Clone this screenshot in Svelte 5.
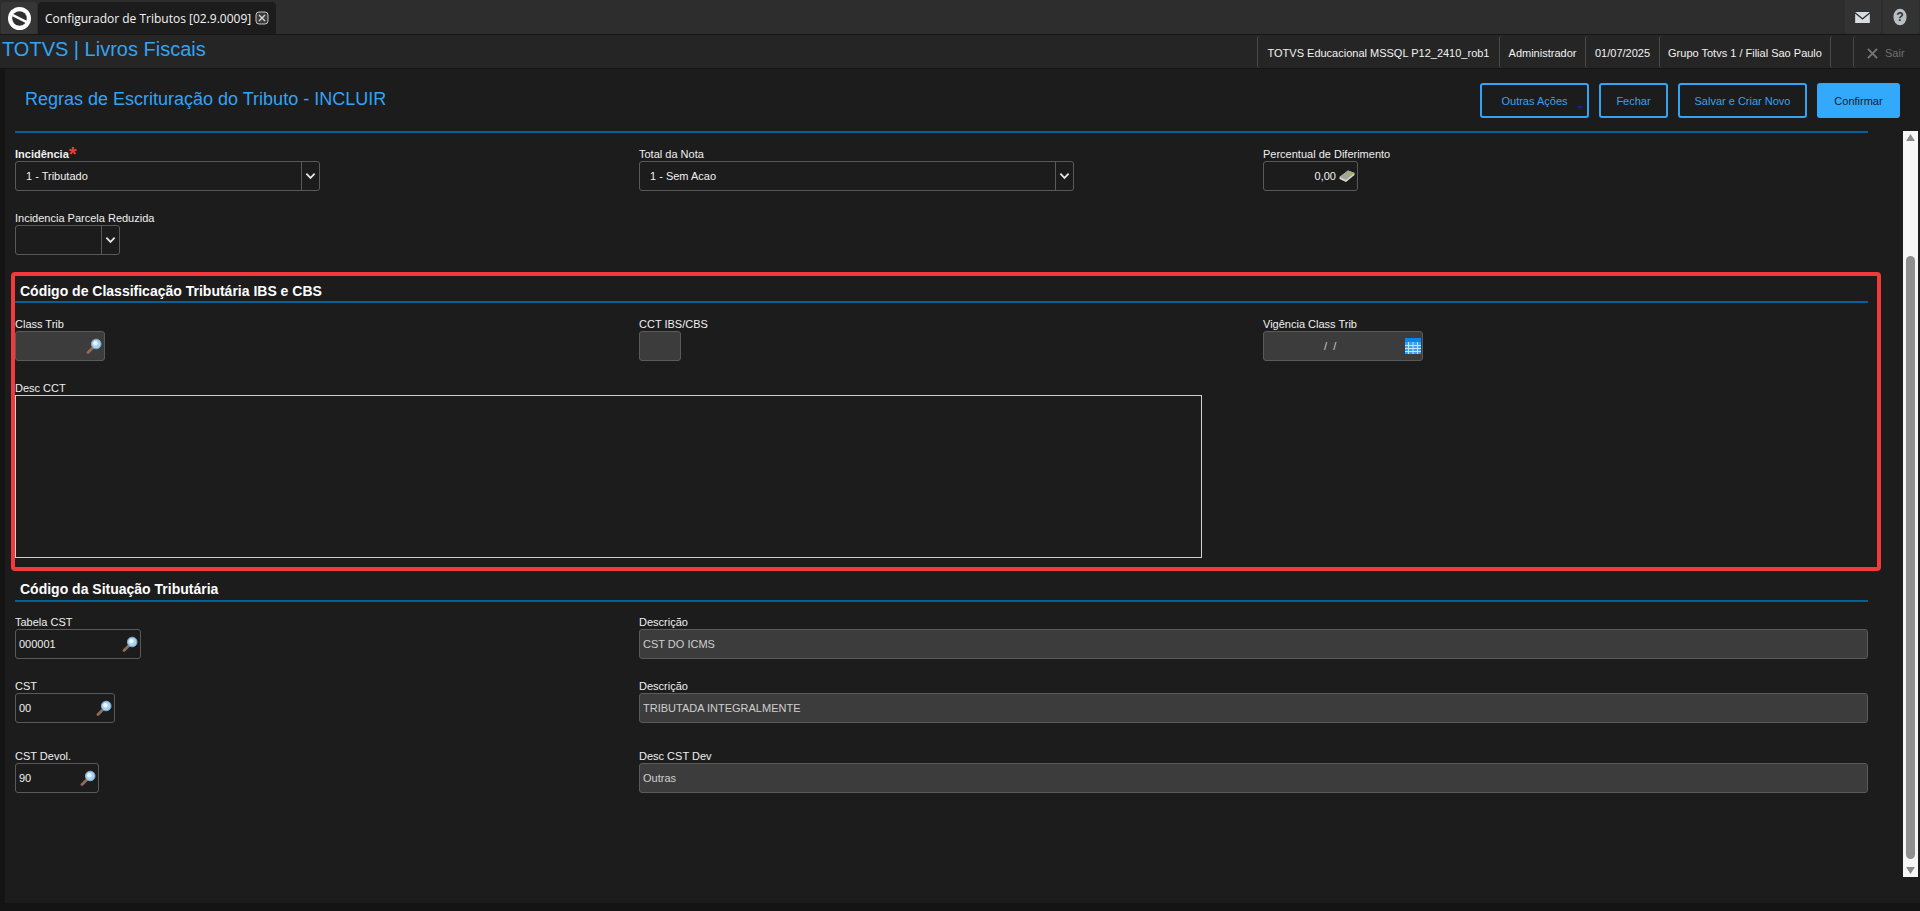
<script>
  const infos = [
    { text: 'TOTVS Educacional MSSQL P12_2410_rob1', w: 242 },
    { text: 'Administrador', w: 86 },
    { text: '01/07/2025', w: 74 },
    { text: 'Grupo Totvs 1 / Filial Sao Paulo', w: 171 },
    { text: '', w: 23 }
  ];
</script>

{#snippet lupa()}
  <svg class="lupa" viewBox="0 0 16 16" width="16" height="16" aria-hidden="true">
    <path d="M2 14.5 L7 9.5" stroke="#8f6c58" stroke-width="2.8" stroke-linecap="round" />
    <circle cx="10.2" cy="6" r="4.8" fill="#a6d2f4" stroke="#7fa9cc" stroke-width="1" />
    <circle cx="9.4" cy="5.2" r="2.2" fill="#eef8ff" />
  </svg>
{/snippet}

{#snippet chevron()}
  <span class="arrow">
    <svg viewBox="0 0 12 8" width="11" height="8" aria-hidden="true">
      <path d="M1.5 1.5 L6 6 L10.5 1.5" fill="none" stroke="#e6e6e6" stroke-width="2" />
    </svg>
  </span>
{/snippet}

<div class="app">
  <div class="topbar">
    <div class="logo">
      <svg viewBox="0 0 24 24" width="23" height="23" aria-hidden="true">
        <circle cx="12" cy="12" r="12" fill="#fff" />
        <circle cx="12" cy="12" r="7.6" fill="#2f2f2f" />
        <path d="M5 8.5 L19 15.5" stroke="#fff" stroke-width="2.4" />
      </svg>
    </div>
    <div class="tab">
      <span>Configurador de Tributos [02.9.0009]</span>
      <svg viewBox="0 0 14 14" width="14" height="14" aria-hidden="true">
        <rect x="1" y="1" width="12" height="12" rx="3" fill="#3c3c3c" stroke="#c4c4c4" stroke-width="1" />
        <path d="M4 4 L10 10 M10 4 L4 10" stroke="#d8d8d8" stroke-width="1.4" />
      </svg>
    </div>
    <div class="top-actions">
      <div class="top-btn">
        <svg viewBox="0 0 16 12" width="15" height="11" aria-hidden="true">
          <path d="M0 0 H16 L8 6.5 Z" fill="#d6dde0" />
          <path d="M0 2 L8 8.5 L16 2 V12 H0 Z" fill="#d6dde0" />
        </svg>
      </div>
      <div class="top-btn">
        <svg viewBox="0 0 16 20" width="14" height="18" aria-hidden="true">
          <ellipse cx="8" cy="10" rx="7.5" ry="9.5" fill="#b9c0c4" />
          <text x="8" y="15" text-anchor="middle" class="q">?</text>
        </svg>
      </div>
    </div>
  </div>

  <div class="infobar">
    <div class="brand">TOTVS | Livros Fiscais</div>
    <div class="infos">
      {#each infos as i}
        <div class="info" style:width="{i.w}px">{i.text}</div>
      {/each}
      <div class="sair">
        <svg viewBox="0 0 12 12" width="11" height="11" aria-hidden="true">
          <path d="M1 1 L11 11 M11 1 L1 11" stroke="#777" stroke-width="2" />
        </svg>
        <span>Sair</span>
      </div>
    </div>
  </div>

  <div class="main">
    <div class="head">
      <h1>Regras de Escrituração do Tributo - INCLUIR</h1>
      <div class="buttons">
        <button class="outline more">Outras Ações<i></i></button>
        <button class="outline fechar">Fechar</button>
        <button class="outline salvar">Salvar e Criar Novo</button>
        <button class="primary">Confirmar</button>
      </div>
    </div>

    <div class="scroller">
      <div class="form">
        <div class="rule"></div>

        <div class="row r1">
          <div class="field">
            <span class="lbl strong">Incidência<em>*</em></span>
            <div class="sel w305"><span>1 - Tributado</span>{@render chevron()}</div>
          </div>
          <div class="field">
            <span class="lbl">Total da Nota</span>
            <div class="sel w435"><span>1 - Sem Acao</span>{@render chevron()}</div>
          </div>
          <div class="field">
            <span class="lbl">Percentual de Diferimento</span>
            <div class="box w95 right">
              <span>0,00</span>
              <svg class="money" viewBox="0 0 16 12" width="16" height="12" aria-hidden="true">
                <path d="M0.5 7 L9 0.5 L15.5 3 V5 L7 12 L0.5 9 Z" fill="#d9d6cc" />
                <path d="M0.5 7 L9 0.5 L15.5 3 L7 10 Z" fill="#a7a398" />
                <path d="M7.5 4.5 L10.5 2 L14.5 3.4 L11.5 6 Z" fill="#93b86c" />
              </svg>
            </div>
          </div>
        </div>

        <div class="row r2">
          <div class="field">
            <span class="lbl">Incidencia Parcela Reduzida</span>
            <div class="sel w105"><span></span>{@render chevron()}</div>
          </div>
        </div>

        <section class="marked">
          <h2>Código de Classificação Tributária IBS e CBS</h2>
          <div class="row r3">
            <div class="field">
              <span class="lbl">Class Trib</span>
              <div class="box off w90 end">{@render lupa()}</div>
            </div>
            <div class="field">
              <span class="lbl">CCT IBS/CBS</span>
              <div class="box off w42"></div>
            </div>
            <div class="field">
              <span class="lbl">Vigência Class Trib</span>
              <div class="box off w160 date">
                <span class="slashes">/&nbsp;&nbsp;/</span>
                <svg class="cal" viewBox="0 0 16 16" width="16" height="16" aria-hidden="true">
                  <rect width="16" height="16" fill="#0b87ec" />
                  <rect y="4" width="16" height="12" fill="#3d9fef" />
                  <path d="M0 7.5 H16 M0 10.5 H16 M0 13.5 H16 M3.5 4 V16 M8 4 V16 M12.5 4 V16" stroke="#c4e2fa" stroke-width="1" />
                </svg>
              </div>
            </div>
          </div>
          <div class="field desc">
            <span class="lbl">Desc CCT</span>
            <div class="area"></div>
          </div>
        </section>

        <h2 class="second">Código da Situação Tributária</h2>

        <div class="row r4 ra">
          <div class="field">
            <span class="lbl">Tabela CST</span>
            <div class="box w126 val"><span>000001</span>{@render lupa()}</div>
          </div>
          <div class="field span2">
            <span class="lbl">Descrição</span>
            <div class="box off wide"><span>CST DO ICMS</span></div>
          </div>
        </div>
        <div class="row r4 rb">
          <div class="field">
            <span class="lbl">CST</span>
            <div class="box w100 val"><span>00</span>{@render lupa()}</div>
          </div>
          <div class="field span2">
            <span class="lbl">Descrição</span>
            <div class="box off wide"><span>TRIBUTADA INTEGRALMENTE</span></div>
          </div>
        </div>
        <div class="row r4 rc">
          <div class="field">
            <span class="lbl">CST Devol.</span>
            <div class="box w84 val"><span>90</span>{@render lupa()}</div>
          </div>
          <div class="field span2">
            <span class="lbl">Desc CST Dev</span>
            <div class="box off wide"><span>Outras</span></div>
          </div>
        </div>
      </div>

      <div class="scrollbar">
        <svg viewBox="0 0 10 8" width="9" height="7" aria-hidden="true"><path d="M5 0 L10 8 H0 Z" fill="#8a8a8a" /></svg>
        <div class="thumb-space"><div class="thumb"></div></div>
        <svg viewBox="0 0 10 8" width="9" height="7" aria-hidden="true"><path d="M0 0 H10 L5 8 Z" fill="#8a8a8a" /></svg>
      </div>
    </div>
  </div>
</div>

<style>
  :global(body) { margin: 0; background: #141414; }
  .app {
    width: 1920px; height: 911px; overflow: hidden;
    display: flex; flex-direction: column;
    font-family: "Liberation Sans", Arial, sans-serif;
    background: #141414; color: #f0f0f0;
  }
  .topbar {
    height: 35px; box-sizing: border-box; flex: none; display: flex; align-items: flex-end;
    background: #2d2d2d; border-bottom: 1px solid #161616;
  }
  .logo {
    width: 36px; height: 32px; margin-left: 1px; background: #363636; border-radius: 4px 4px 0 0;
    display: flex; align-items: center; justify-content: center;
  }
  .tab {
    width: 238px; height: 32px; box-sizing: border-box; padding-left: 7px; margin-left: 1px;
    background: #1c1c1c; border-radius: 4px 4px 0 0;
    display: flex; align-items: center; gap: 4px;
    font-family: "Open Sans", sans-serif; font-size: 12px; color: #f4f4f4; white-space: nowrap;
  }
  .top-actions { margin-left: auto; margin-right: 1px; display: flex; gap: 2px; height: 34px; }
  .top-btn {
    width: 36px; height: 34px; box-sizing: border-box; padding-right: 2px; background: #333; border-radius: 0 0 3px 3px;
    display: flex; align-items: center; justify-content: center;
  }
  .q { font: bold 14px "Liberation Sans", sans-serif; fill: #333; }
  .infobar {
    height: 33px; flex: none; display: flex; align-items: center; justify-content: space-between;
    background: #252525;
  }
  .brand { margin-left: 2px; padding-bottom: 5px; font-size: 20px; color: #33a3f4; white-space: nowrap; }
  .infos { display: flex; height: 32px; margin-top: 1px; font-size: 11px; color: #f2f2f2; }
  .info {
    display: flex; align-items: center; justify-content: center; padding-top: 2px; white-space: nowrap;
    box-sizing: border-box;
    border-left: 1px solid #4a4a4a; border-radius: 3px 0 0 3px;
  }
  .sair {
    width: 67px; box-sizing: border-box; padding: 2px 0 0 13px;
    display: flex; align-items: center; gap: 7px; color: #707070;
    border-left: 1px solid #4a4a4a; border-radius: 3px 0 0 3px;
  }
  .main {
    flex: 1; min-height: 0; margin: 1px 0 8px 5px; background: #1c1c1c;
    display: flex; flex-direction: column;
  }
  .head {
    height: 62px; flex: none; display: flex; justify-content: space-between; align-items: flex-start;
    box-sizing: border-box; padding: 14px 20px 0 20px;
  }
  h1 { margin: 6px 0 0; font-size: 18px; font-weight: 400; color: #33a3f4; white-space: nowrap; line-height: 20px; }
  .buttons { display: flex; gap: 10px; }
  button {
    height: 35px; box-sizing: border-box; border-radius: 3px; font: 11px "Liberation Sans", sans-serif;
    padding: 0; position: relative;
  }
  .outline { background: transparent; border: 2px solid #33a3f4; color: #33a3f4; }
  .more { width: 109px; }
  .more i {
    position: absolute; right: 4px; bottom: 6px; width: 0; height: 0;
    border: 3.5px solid transparent; border-top: 4px solid #1a1a9a; border-bottom: 0;
  }
  .fechar { width: 69px; }
  .salvar { width: 129px; }
  .primary { width: 83px; background: #33a9fb; border: 0; color: #1c1c1c; }
  .scroller { flex: 1; min-height: 0; display: flex; }
  .form { width: 1898px; flex: none; box-sizing: border-box; padding: 0 10px; }
  .rule { height: 2px; width: 1853px; background: #00629a; }
  .row { display: grid; grid-template-columns: 624px 624px 605px; width: 1853px; }
  .r1 { margin-top: 15px; height: 64px; }
  .r2 { height: 60px; }
  .field { display: flex; flex-direction: column; align-items: flex-start; }
  .span2 { grid-column: span 2; }
  .lbl { height: 13px; line-height: 13px; font-size: 11px; color: #f0f0f0; white-space: nowrap; }
  .lbl.strong { font-weight: 700; }
  .lbl em { color: #f23a3a; font-style: normal; font-size: 20px; line-height: 10px; font-weight: 700; vertical-align: -3px; }
  .sel, .box {
    height: 30px; box-sizing: border-box; border: 1px solid #5a5a5a; border-radius: 3px;
    display: flex; align-items: center; font-size: 11px; color: #f0f0f0;
  }
  .sel > span:first-child { flex: 1; padding-left: 10px; }
  .arrow {
    width: 17px; height: 28px; border-left: 1px solid #5a5a5a;
    display: flex; align-items: center; justify-content: center;
  }
  .w305 { width: 305px; } .w435 { width: 435px; } .w105 { width: 105px; }
  .w95 { width: 95px; } .w90 { width: 90px; } .w42 { width: 42px; } .w160 { width: 160px; }
  .w126 { width: 126px; } .w100 { width: 100px; } .w84 { width: 84px; }
  .wide { width: 1229px; padding-left: 3px; color: #cfcfcf; }
  .off { background: #3c3c3c; }
  .right { justify-content: flex-end; padding-right: 2px; gap: 3px; }
  .end { justify-content: flex-end; padding-right: 2px; }
  .val { justify-content: space-between; padding: 0 2px 0 3px; }
  .date { position: relative; justify-content: flex-end; padding-right: 1px; }
  .slashes { position: absolute; left: 60px; color: #cfcfcf; }
  .marked {
    width: 1870px; height: 299px; margin-left: -4px; box-sizing: border-box;
    border: 4px solid #f23a3a; border-radius: 4px;
  }
  h2 {
    margin: 0; box-sizing: border-box; height: 27px; width: 1853px; padding: 6px 0 0 5px;
    font-size: 14px; line-height: 16px; font-weight: 700; color: #fff;
    border-bottom: 2px solid #00629a; white-space: nowrap;
  }
  .marked h2 { padding-top: 7px; }
  .r3 { margin-top: 15px; height: 64px; }
  .desc { height: 176px; }
  .area { width: 1187px; height: 163px; box-sizing: border-box; border: 1px solid #d0d0d0; }
  .second { margin-top: 4px; }
  .r4 { height: 43px; }
  .ra { margin-top: 14px; }
  .rb { margin-top: 21px; }
  .rc { margin-top: 27px; }
  .lupa { flex: none; }
  .scrollbar {
    width: 15px; height: 746px; flex: none; background: #f6f6f6;
    display: flex; flex-direction: column; align-items: center; justify-content: space-between;
    padding: 3px 0; box-sizing: border-box;
  }
  .thumb-space { flex: 1; width: 9px; padding: 115px 0 8px; box-sizing: border-box; display: flex; }
  .thumb { flex: 1; background: #8f8f8f; border-radius: 5px; }
</style>
